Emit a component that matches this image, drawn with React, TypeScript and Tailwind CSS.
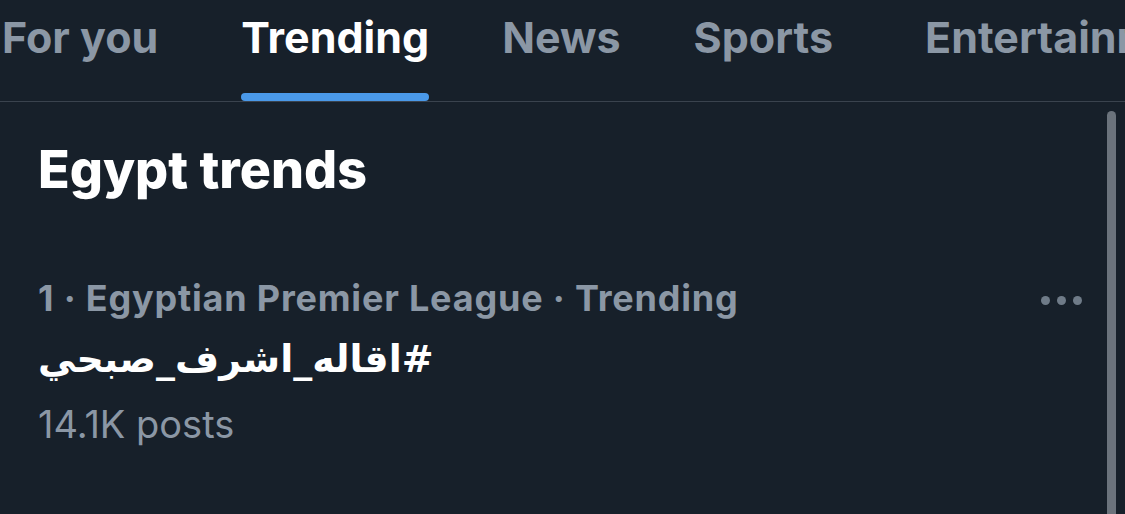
import React from "react";

const tabs = [
  { label: "For you", active: false, ml: "ml-[2px]" },
  { label: "Trending", active: true, ml: "ml-[83px]" },
  { label: "News", active: false, ml: "ml-[73px]" },
  { label: "Sports", active: false, ml: "ml-[73px]" },
  { label: "Entertainment", active: false, ml: "ml-[92px]" },
];

export default function App() {
  return (
    <div className="relative w-[1125px] h-[514px] overflow-hidden bg-[#17202a] font-['Inter','Liberation_Sans',sans-serif]">
      <div className="flex h-[102px] border-b border-[#3a434e] whitespace-nowrap">
        {tabs.map((t) => (
          <div key={t.label} className={`${t.ml} shrink-0 flex flex-col justify-between`}>
            <div
              className={`pt-[10px] text-[43px] leading-[54px] font-bold ${
                t.active ? "text-white" : "text-[#8b97a5]"
              }`}
            >
              {t.label}
            </div>
            {t.active ? (
              <div className="h-[8px] rounded-full bg-[#4a99e9]" />
            ) : (
              <div className="h-[8px]" />
            )}
          </div>
        ))}
      </div>

      <div className="pl-[38px] pr-[40px]">
        <div className="pt-[38px] text-[52px] leading-[60px] font-extrabold text-white">Egypt trends</div>

        <div className="mt-[76px] flex items-start justify-between">
          <div>
            <div className="text-[36px] leading-[44px] font-bold tracking-[0.8px] text-[#8b97a5]">
              1 · Egyptian Premier League · Trending
            </div>
            <div className="mt-[13px] text-[38px] leading-[52px] font-bold text-white font-['DejaVu_Sans',sans-serif]">
              <span dir="rtl">#اقاله_اشرف_صبحي</span>
            </div>
            <div className="mt-[16px] text-[38px] leading-[46px] text-[#8b97a5]">14.1K posts</div>
          </div>
          <div className="mt-[20px] mr-[3px] flex gap-[7px]">
            <span className="w-[9px] h-[9px] rounded-full bg-[#6f7b88]" />
            <span className="w-[9px] h-[9px] rounded-full bg-[#6f7b88]" />
            <span className="w-[9px] h-[9px] rounded-full bg-[#6f7b88]" />
          </div>
        </div>
      </div>

      <div className="absolute left-[1107px] top-[111px] w-[9px] h-[420px] rounded-full bg-[#6b737c]" />
    </div>
  );
}
